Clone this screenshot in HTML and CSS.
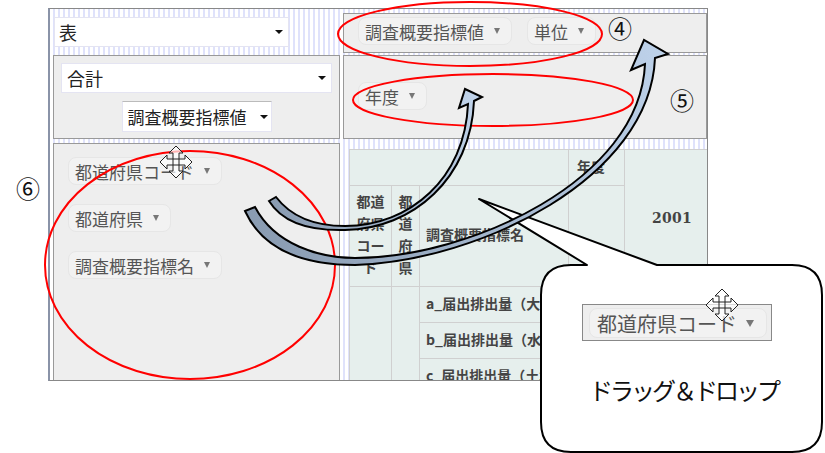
FILE: index.html
```html
<!DOCTYPE html>
<html lang="ja">
<head>
<meta charset="utf-8">
<title>ドラッグ＆ドロップ</title>
<link rel="stylesheet" href="styles.css">
</head>
<body>
<main class="frame">
  <section class="col-left">
    <div class="select select-top"><span>表</span><i class="caret"></i></div>
    <div class="panel panel-controls">
      <div class="select select-wide"><span>合計</span><i class="caret"></i></div>
      <div class="select select-small"><span>調査概要指標値</span><i class="caret"></i></div>
    </div>
    <div class="panel panel-fields">
      <div class="pill pill-long"><span>都道府県コード</span><i class="tri"></i></div>
      <div class="pill"><span>都道府県</span><i class="tri"></i></div>
      <div class="pill"><span>調査概要指標名</span><i class="tri"></i></div>
    </div>
  </section>
  <section class="col-right">
    <div class="panel panel-cols">
      <div class="pill"><span>調査概要指標値</span><i class="tri"></i></div>
      <div class="pill"><span>単位</span><i class="tri"></i></div>
    </div>
    <div class="panel panel-rows">
      <div class="pill"><span>年度</span><i class="tri"></i></div>
    </div>
    <div class="table-wrap">
      <table class="pivot">
        <colgroup>
          <col class="c1"><col class="c2"><col class="c3"><col class="c4"><col class="c5">
        </colgroup>
        <tr class="r-top"><th colspan="3"></th><th class="year-label">年度</th><th rowspan="2" class="year">2001</th></tr>
        <tr class="r-head"><th>都道府県コード</th><th>都道府県</th><th class="left">調査概要指標名</th><th></th></tr>
        <tr class="r-body"><th rowspan="3"></th><th rowspan="3"></th><th class="left">a_届出排出量（大気）</th><th></th><th></th></tr>
        <tr class="r-body"><th class="left">b_届出排出量（水域）</th><th></th><th></th></tr>
        <tr class="r-body"><th class="left">c_届出排出量（土壌）</th><th></th><th></th></tr>
      </table>
    </div>
  </section>
</main>

<svg class="overlay" viewBox="0 0 825 453" aria-hidden="true">
  <path class="bubble" d="M571,265 L587,265 L479,199 L657,265 L792,265 Q822,265 822,295 L822,422 Q822,452 792,452 L571,452 Q541,452 541,422 L541,295 Q541,265 571,265 Z"/>
</svg>

<div class="callout">
  <div class="chip">
    <div class="pill pill-big"><span>都道府県コード</span><i class="tri"></i></div>
  </div>
  <p class="callout-label">ドラッグ＆ドロップ</p>
</div>

<svg class="overlay" viewBox="0 0 825 453">
  <defs>
    <linearGradient id="a1" gradientUnits="userSpaceOnUse" x1="270" y1="200" x2="475" y2="100">
      <stop offset="0" stop-color="#8a9cb2"/><stop offset="1" stop-color="#c0d3ea"/>
    </linearGradient>
    <linearGradient id="a2" gradientUnits="userSpaceOnUse" x1="250" y1="210" x2="650" y2="50">
      <stop offset="0" stop-color="#8a9cb2"/><stop offset="1" stop-color="#bcd0e8"/>
    </linearGradient>
    <g id="move">
      <path d="M0,-16 L7,-9 L3,-9 L3,-3 L9,-3 L9,-7 L16,0 L9,7 L9,3 L3,3 L3,9 L7,9 L0,16 L-7,9 L-3,9 L-3,3 L-9,3 L-9,7 L-16,0 L-9,-7 L-9,-3 L-3,-3 L-3,-9 L-7,-9 Z"/>
      <path d="M-3,-3 V3 M3,-3 V3 M-3,-3 H3 M-3,3 H3"/>
    </g>
  </defs>
  <ellipse class="ring" cx="470" cy="34" rx="132" ry="32"/>
  <ellipse class="ring" cx="493" cy="100" rx="140" ry="26"/>
  <ellipse class="ring" cx="190" cy="265" rx="145" ry="114"/>
  <path class="arrow" fill="url(#a1)" d="M269,201 L276,197 C292,218 318,226 345,226 C410,226 465,178 468,104 L459,108 L465,89 L482,97 L474,101 C471,178 413,229 345,230 C308,231 282,222 269,201 Z"/>
  <path class="arrow" fill="url(#a2)" d="M245,211 L255,207 C275,245 320,258 355,258 C470,258 640,180 645,64 L631,70 L644,40 L668,54 L655,58 C650,178 480,261 355,265 C300,265 262,248 245,211 Z"/>
  <use href="#move" class="cursor" x="176" y="162"/>
  <use href="#move" class="cursor" x="722" y="305"/>
  <text class="num" x="620" y="38">④</text>
  <text class="num" x="682" y="110">⑤</text>
  <text class="num" x="28" y="198">⑥</text>
</svg>
</body>
</html>
```
FILE: styles.css
```css
* { box-sizing: border-box; }
html, body { margin: 0; padding: 0; background: #fff; }
body {
  position: relative;
  width: 825px;
  height: 453px;
  overflow: hidden;
  font-family: "Noto Sans CJK JP", "Noto Sans", sans-serif;
  color: #333;
}
.frame {
  margin: 8px 0 0 48px;
  width: 660px;
  height: 373px;
  display: grid;
  grid-template-columns: 291px 1fr;
  border: 1px solid #888;
  border-left: 2px solid #8a93a8;
  overflow: hidden;
  background: repeating-linear-gradient(90deg, #fff 0 3px, #dfe2fb 3px 5px);
}
.col-left, .col-right { display: flex; flex-direction: column; min-width: 0; }
.col-left { padding: 8px 0 0 3px; }
.col-right { padding: 4px 0 0 2px; }

.panel {
  background: #eee;
  border: 1px solid #999;
  flex: none;
}
.select {
  background: #fff;
  border: 1px solid #e4e4f2;
  display: flex;
  align-items: center;
  justify-content: space-between;
  font-size: 18px;
  color: #222;
}
.caret {
  width: 0; height: 0;
  border-left: 4px solid transparent;
  border-right: 4px solid transparent;
  border-top: 4px solid #111;
  flex: none;
}
.select-top {
  width: 235px;
  height: 30px;
  margin: 0 0 8px 1px;
  padding: 0 5px 0 4px;
}
.panel-controls {
  height: 84px;
  width: 287px;
  padding: 7px 7px 0;
  display: flex;
  flex-direction: column;
  align-items: center;
  margin-bottom: 4px;
}
.select-wide { width: 100%; height: 30px; padding: 0 5px 0 5px; }
.select-small {
  width: 150px;
  height: 31px;
  margin-top: 8px;
  padding: 0 3px 0 5px;
  font-size: 17px;
  border-top: 1px solid #bbb;
}
.panel-fields {
  flex: 1;
  width: 287px;
  padding: 13px 0 0 14px;
  display: flex;
  flex-direction: column;
  align-items: flex-start;
  gap: 19px;
  border-bottom: 0;
}
.pill {
  display: inline-flex;
  align-items: center;
  height: 28px;
  padding: 0 11px 0 6px;
  gap: 10px;
  background: #f2f2f2;
  border: 1px solid #e6e6e6;
  border-radius: 8px;
  font-size: 17px;
  color: #555;
  white-space: nowrap;
}
.tri {
  width: 0; height: 0;
  border-left: 3.5px solid transparent;
  border-right: 3.5px solid transparent;
  border-top: 6px solid #777;
  flex: none;
}
.panel-cols {
  height: 40px;
  padding: 3px 0 0 14px;
  display: flex;
  align-items: flex-start;
  gap: 15px;
  margin-bottom: 2px;
}
.panel-rows {
  height: 84px;
  padding: 26px 0 0 14px;
  display: flex;
  align-items: flex-start;
}
.table-wrap {
  padding: 10px 0 0 6px;
  flex: 1;
  overflow: hidden;
}
.pivot {
  table-layout: fixed;
  border-collapse: collapse;
  width: 370px;
  font-size: 14px;
  color: #444;
}
.c1 { width: 42px; }
.c2 { width: 28px; }
.c3 { width: 149px; }
.c4 { width: 56px; }
.c5 { width: 95px; }
.pivot th {
  background: #e6efed;
  border: 1.5px solid #d0d0d0;
  padding: 0 6px 4px;
  line-height: 22px;
  font-weight: 700;
  white-space: normal;
}
.pivot th.left { text-align: left; white-space: nowrap; overflow: hidden; }
.pivot th.year-label { text-align: left; padding-left: 8px; }
.pivot th.year { font-size: 14px; font-family: "DejaVu Serif", serif; letter-spacing: .3px; padding-bottom: 0; }
.r-top { height: 36px; }
.r-head { height: 101px; }
.r-body { height: 36px; }

.overlay {
  position: absolute;
  left: 0; top: 0;
  width: 825px;
  height: 453px;
  pointer-events: none;
}
.bubble { fill: #fff; stroke: #000; stroke-width: 2; stroke-linejoin: round; }
.callout {
  position: absolute;
  left: 540px; top: 265px;
  width: 283px; height: 188px;
  padding: 39px 0 0 42px;
  display: flex;
  flex-direction: column;
  align-items: flex-start;
}
.chip {
  width: 190px;
  height: 37px;
  background: #eee;
  border: 1px solid #888;
  padding: 3px 0 0 6px;
}
.pill-big {
  width: 178px;
  height: 30px;
  font-size: 20px;
  padding: 0 12px 0 7px;
  justify-content: space-between;
  gap: 0;
}
.pill-big .tri {
  border-left-width: 4.5px;
  border-right-width: 4.5px;
  border-top-width: 7px;
}
.callout-label {
  margin: 34px 0 0 7px;
  font-size: 24px;
  line-height: 30px;
  letter-spacing: -3px;
  color: #111;
  white-space: nowrap;
}
.ring { fill: none; stroke: #f00; stroke-width: 2; }
.arrow { stroke: #000; stroke-width: 2; stroke-linejoin: miter; }
.cursor { fill: rgba(255,255,255,.7); stroke: #222; stroke-width: 1; }
.num { font-size: 24px; text-anchor: middle; fill: #111; font-family: "Noto Sans CJK JP", sans-serif; }
```
